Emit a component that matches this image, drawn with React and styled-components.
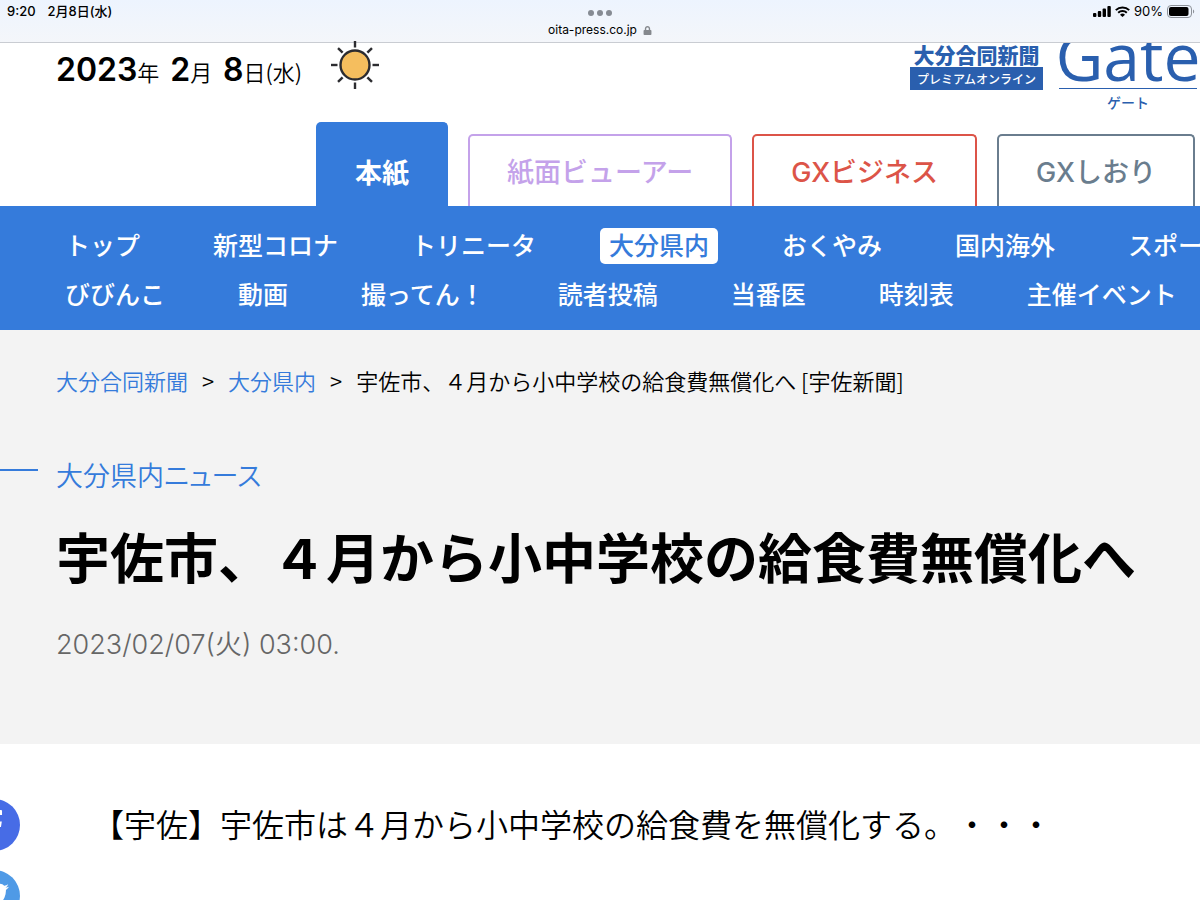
import React from 'react';
import styled, {createGlobalStyle, css} from 'styled-components';
import {FaFacebookF, FaTwitter, FaLock} from 'react-icons/fa';

const GlobalStyle = createGlobalStyle`
    *{ box-sizing:border-box; }
    body{
        margin:0;
        background:#fff;
        color:#000;
        font-family:"Noto Sans CJK JP", sans-serif;
        text-spacing-trim:space-all;
        overflow-x:hidden;
    }
    a{ color:inherit; text-decoration:none; }
    ul, ol{ margin:0; padding:0; list-style:none; }
    `;

const Page = styled.div`
    overflow:hidden;
    white-space:nowrap;
    `;

const StatusBar = styled.div`
    display:grid;
    grid-template-columns:1fr auto 1fr;
    height:43px;
    padding:0 7px;
    background:linear-gradient(#edf4fe, #f4f6fa);
    border-bottom:1px solid #c9ccd2;
    font-family:Inter, "Noto Sans CJK JP", sans-serif;
    font-size:13px;
    line-height:22px;
    font-weight:500;
    `;

const StatusLeft = styled.div`
    display:flex;
    gap:12px;
    `;

const StatusRight = styled.div`
    display:flex;
    justify-content:flex-end;
    align-items:center;
    gap:4px;
    height:22px;
    font-weight:400;
    margin-right:-2px;
    `;

const Address = styled.div`
    display:flex;
    flex-direction:column;
    align-items:center;
    padding-top:10px;
    gap:6px;
    `;

const Dots = styled.div`
    display:flex;
    gap:3px;
    span{
        width:6px;
        height:6px;
        border-radius:50%;
        background:#868b93;
    }
    `;

const Url = styled.div`
    display:flex;
    align-items:center;
    gap:6px;
    font-size:12px;
    line-height:16px;
    font-weight:400;
    svg{ color:#85888d; }
    `;

const TopRow = styled.header`
    display:flex;
    align-items:flex-start;
    height:79px;
    padding:0 3px 0 56px;
    `;

const Today = styled.div`
    display:flex;
    align-items:flex-start;
    gap:28px;
    svg{ margin-top:-3px; }
    `;

const DateText = styled.div`
    font-size:22px;
    line-height:54px;
    font-weight:350;
    b{
        font-family:Inter, sans-serif;
        font-size:32px;
        font-weight:600;
    }
    b + b{ margin-left:6px; }
    `;

const Logos = styled.div`
    display:flex;
    gap:16px;
    margin-left:auto;
    color:#2a5fae;
    `;

const PaperLogo = styled.a`
    display:flex;
    flex-direction:column;
    gap:2px;
    width:133px;
    text-align:center;
    font-size:21px;
    line-height:22px;
    font-weight:900;
    span{
        background:#2a5fae;
        color:#fff;
        font-size:12px;
        line-height:23px;
        font-weight:500;
    }
    `;

const GateLogo = styled.a`
    display:flex;
    flex-direction:column;
    align-items:center;
    width:138px;
    font-size:14px;
    line-height:27px;
    font-weight:500;
    `;

const GateWord = styled.span`
    display:flex;
    justify-content:center;
    width:100%;
    height:46px;
    border-bottom:1px solid #2a5fae;
    font-family:"Open Sans", sans-serif;
    font-size:66px;
    line-height:24px;
    font-weight:500;
    overflow-y:clip;
    `;

const Tabs = styled.nav`
    display:flex;
    justify-content:flex-end;
    align-items:flex-end;
    gap:20px;
    padding-right:5px;
    font-family:Inter, "Noto Sans CJK JP", sans-serif;
    font-size:27px;
    font-weight:500;
    `;

const Tab = styled.a`
    height:72px;
    padding:0 37px;
    line-height:74px;
    border:2px solid;
    border-bottom:0;
    border-radius:5px 5px 0 0;
    color:${({$color})=>$color};
    ${({$active})=>$active && css`
        height:84px;
        line-height:100px;
        background:#357bdb;
        border-color:#357bdb;
        font-weight:700;
    `}
    `;

const MainNav = styled.nav`
    display:flex;
    flex-direction:column;
    gap:13px;
    padding:22px 0 17px 56px;
    background:#357bdb;
    color:#fff;
    font-size:25px;
    line-height:32px;
    font-weight:500;
    `;

const NavRow = styled.ul`
    display:flex;
    gap:55px;
    `;

const NavLink = styled.a`
    display:block;
    padding:0 9px 4px;
    border-radius:5px;
    ${({$active})=>$active && css`
        background:#fff;
        color:#357bdb;
    `}
    `;

const Hero = styled.section`
    padding:34px 0 80px 56px;
    background:#f3f3f3;
    `;

const Crumbs = styled.ol`
    display:flex;
    gap:14px;
    font-size:22px;
    line-height:32px;
    font-weight:350;
    a{ color:#357bdb; }
    `;

const Category = styled.div`
    display:flex;
    align-items:center;
    gap:18px;
    margin:59px 0 0 -56px;
    color:#357bdb;
    font-size:27px;
    line-height:40px;
    font-weight:350;
    font-feature-settings:"palt";
    `;

const Rule = styled.span`
    width:38px;
    height:2px;
    margin-bottom:10px;
    background:#357bdb;
    `;

const Title = styled.h1`
    margin:21px 0 0;
    font-size:54px;
    line-height:80px;
    font-weight:700;
    `;

const Published = styled.time`
    display:block;
    margin-top:30px;
    color:#666;
    font-family:Inter, "Noto Sans CJK JP", sans-serif;
    font-size:27px;
    line-height:38px;
    font-weight:350;
    `;

const Article = styled.article`
    display:flex;
    align-items:flex-start;
    gap:72px;
    padding-top:55px;
    `;

const Share = styled.div`
    display:flex;
    flex-direction:column;
    gap:19px;
    margin-left:-32px;
    `;

const ShareLink = styled.a`
    display:flex;
    align-items:center;
    justify-content:center;
    width:52px;
    height:52px;
    border-radius:50%;
    background:${({$color})=>$color};
    color:#fff;
    font-size:30px;
    `;

const Body = styled.p`
    margin:0;
    font-size:32px;
    line-height:48px;
    font-weight:350;
    `;

const firstRow = ['トップ', '新型コロナ', 'トリニータ', '大分県内', 'おくやみ', '国内海外', 'スポーツ'];
const secondRow = ['びびんこ', '動画', '撮ってん！', '読者投稿', '当番医', '時刻表', '主催イベント'];

const Signal = () => (
    <svg width="18" height="11" viewBox="0 0 18 11" aria-hidden="true">
        <rect x="0" y="7" width="3.4" height="4" rx="1" />
        <rect x="4.8" y="5" width="3.4" height="6" rx="1" />
        <rect x="9.6" y="2.5" width="3.4" height="8.5" rx="1" />
        <rect x="14.4" y="0" width="3.4" height="11" rx="1" />
    </svg>
)

const Wifi = () => (
    <svg width="15" height="11" viewBox="0 0 15 11" aria-hidden="true">
        <g fill="none" stroke="#000" strokeWidth="2">
            <path d="M.8 4.1a9.6 9.6 0 0 1 13.4 0" />
            <path d="M3.2 6.7a6.2 6.2 0 0 1 8.6 0" />
        </g>
        <path d="M5 8.7a3.6 3.6 0 0 1 5 0L7.5 11z" />
    </svg>
)

const Battery = () => (
    <svg width="28" height="13" viewBox="0 0 28 13" aria-hidden="true">
        <rect x=".5" y=".5" width="24" height="12" rx="3.5" fill="none" stroke="#8d9299" />
        <rect x="2" y="2" width="19.5" height="9" rx="2" />
        <path d="M26 4.5c1.6.5 1.6 3.5 0 4z" fill="#8d9299" />
    </svg>
)

const Sun = () => (
    <svg width="50" height="50" viewBox="-25 -25 50 50" role="img" aria-label="晴れ">
        <circle r="14.5" fill="#f5be5e" stroke="#2c2c30" strokeWidth="2.4" />
        <g stroke="#2c2c30" strokeWidth="2.4">
            {[0, 45, 90, 135, 180, 225, 270, 315].map((deg)=>(
                <path key={deg} d="M0 -17.5V-24" transform={`rotate(${deg})`} />
            ))}
        </g>
    </svg>
)

const NavList = ({items, active}) => (
    <NavRow>
        {items.map((item)=>(
            <li key={item}>
                <NavLink href="#" $active={item === active}>{item}</NavLink>
            </li>
        ))}
    </NavRow>
)

const App = () => {
  return (
    <Page>
        <GlobalStyle />
        <StatusBar>
            <StatusLeft>
                <span>9:20</span>
                <span>2月8日(水)</span>
            </StatusLeft>
            <Address>
                <Dots><span /><span /><span /></Dots>
                <Url>oita-press.co.jp <FaLock size={9} /></Url>
            </Address>
            <StatusRight>
                <Signal />
                <Wifi />
                <span>90%</span>
                <Battery />
            </StatusRight>
        </StatusBar>

        <TopRow>
            <Today>
                <DateText><b>2023</b>年 <b>2</b>月 <b>8</b>日(水)</DateText>
                <Sun />
            </Today>
            <Logos>
                <PaperLogo href="#">
                    大分合同新聞
                    <span>プレミアムオンライン</span>
                </PaperLogo>
                <GateLogo href="#">
                    <GateWord>Gate</GateWord>
                    ゲート
                </GateLogo>
            </Logos>
        </TopRow>

        <Tabs>
            <Tab href="#" $color="#fff" $active>本紙</Tab>
            <Tab href="#" $color="#c4a2ea">紙面ビューアー</Tab>
            <Tab href="#" $color="#dc5448">GXビジネス</Tab>
            <Tab href="#" $color="#6a7d8e">GXしおり</Tab>
        </Tabs>

        <MainNav>
            <NavList items={firstRow} active="大分県内" />
            <NavList items={secondRow} />
        </MainNav>

        <Hero>
            <Crumbs>
                <li><a href="#">大分合同新聞</a></li>
                <li>&gt;</li>
                <li><a href="#">大分県内</a></li>
                <li>&gt;</li>
                <li>宇佐市、４月から小中学校の給食費無償化へ [宇佐新聞]</li>
            </Crumbs>
            <Category>
                <Rule />
                <a href="#">大分県内ニュース</a>
            </Category>
            <Title>宇佐市、４月から小中学校の給食費無償化へ</Title>
            <Published dateTime="2023-02-07T03:00">2023/02/07(火) 03:00.</Published>
        </Hero>

        <Article>
            <Share>
                <ShareLink href="#" $color="#476ce6" aria-label="Facebook"><FaFacebookF /></ShareLink>
                <ShareLink href="#" $color="#4f9ae6" aria-label="Twitter"><FaTwitter /></ShareLink>
            </Share>
            <Body>【宇佐】宇佐市は４月から小中学校の給食費を無償化する。・・・</Body>
        </Article>
    </Page>
  )
}

export default App
